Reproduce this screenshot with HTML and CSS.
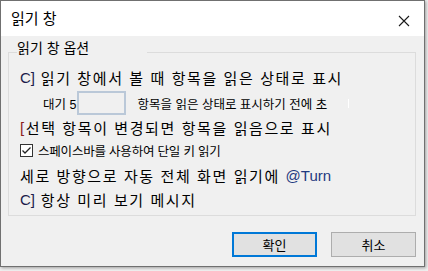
FILE: index.html
```html
<!DOCTYPE html>
<html lang="ko">
<head>
    <meta charset="UTF-8">
    <title>읽기 창</title>
    <link rel="stylesheet" href="styles.css">
</head>
<body>

    <!-- Dialog window -->
    <div class="window">
        <div class="titlebar">
            <span class="title">읽기 창</span>
            <svg class="close" width="12" height="12" viewBox="0 0 12 12">
                <path d="M1 1 L11 11 M11 1 L1 11" stroke="#1a1a1a" stroke-width="1.1" fill="none"/>
            </svg>
        </div>

        <div class="content">
            <!-- Options group -->
            <fieldset class="group">
                <legend>읽기 창 옵션</legend>

                <div class="row r1 big">
                    <span class="mark">C]</span>&nbsp;읽기 창에서 볼 때 항목을 읽은 상태로 표시
                </div>

                <div class="row r2 small">
                    <span class="wait">대기 5</span>
                    <span class="num-box"></span>
                    <span class="after">항목을 읽은 상태로 표시하기 전에 초</span>
                    <span class="caret"></span>
                </div>

                <div class="row r3 big">
                    <span class="bracket">[</span>선택 항목이 변경되면 항목을 읽음으로 표시
                </div>

                <div class="row r4 small">
                    <span class="check">
                        <svg width="13" height="13" viewBox="0 0 13 13">
                            <rect x="0.5" y="0.5" width="12" height="12" fill="#fff" stroke="#333"/>
                            <path d="M2.5 6.5 L5 9 L10.5 3.5" stroke="#222" stroke-width="1.3" fill="none"/>
                        </svg>
                    </span>
                    스페이스바를 사용하여 단일 키 읽기
                </div>

                <div class="row r5 big">
                    세로 방향으로 자동 전체 화면 읽기에&nbsp;<span class="turn">@Turn</span>
                </div>

                <div class="row r6 big">
                    <span class="mark">C]</span>&nbsp;항상 미리 보기 메시지
                </div>
            </fieldset>

            <!-- Dialog buttons -->
            <div class="buttons">
                <button class="btn btn-default">확인</button>
                <button class="btn">취소</button>
            </div>
        </div>
    </div>

</body>
</html>
```

FILE: styles.css
```css
/* General Reset */
body, html {
    margin: 0;
    padding: 0;
}

body {
    width: 428px;
    height: 271px;
    background: #f0f0f0;
    font-family: "Liberation Sans", "Noto Sans CJK KR", sans-serif;
    color: #000;
    overflow: hidden;
}

/* Window frame */
.window {
    width: 423px;
    height: 265px;
    border: 1px solid #707070;
    background: #f0f0f0;
    box-shadow: 1px 1px 3px rgba(0, 0, 0, 0.35);
    display: flex;
    flex-direction: column;
}

.titlebar {
    height: 35px;
    background: #fff;
    display: flex;
    align-items: center;
    justify-content: space-between;
    padding: 0 14px 0 10px;
}

.title {
    font-size: 15px;
    margin-top: -3px;
}

.close {
    margin-top: 4px;
}

.content {
    padding: 0 8px 0 7px;
}

/* Group box */
.group {
    border: 1px solid #dcdcdc;
    margin: 3px 0 0 0;
    padding: 0 0 4px 11px;
}

.group legend {
    font-size: 14px;
    padding: 0 58px 8px 0;
    margin-left: -3px;
    line-height: 18px;
}

.row {
    display: flex;
    align-items: center;
    white-space: nowrap;
}

.big {
    font-size: 15px;
    letter-spacing: 1.6px;
}

.small {
    font-size: 12.5px;
}

.r1 { height: 24px; }
.r2 { height: 28px; }
.r3 { height: 20px; }
.r4 { height: 26px; }
.r5 { height: 24px; }
.r6 { height: 24px; }

.mark {
    color: #1c1c4a;
    letter-spacing: 0;
}

.bracket {
    color: #8a1b1b;
}

.turn {
    color: #1f3a80;
    letter-spacing: 0;
}

/* Wait-time row */
.wait {
    margin-left: 23px;
}

.num-box {
    width: 45px;
    height: 20px;
    border: 2px solid #bac8d8;
    margin-left: 1px;
}

.after {
    margin-left: 11px;
}

.caret {
    width: 1px;
    height: 9px;
    background: #fff;
    margin-left: 21px;
}

.check {
    display: flex;
    margin-right: 5px;
}

.r4 {
    letter-spacing: -0.2px;
}

/* Buttons */
.buttons {
    display: flex;
    justify-content: flex-end;
    gap: 14px;
    margin-top: 16px;
}

.btn {
    width: 85px;
    height: 25px;
    background: #e1e1e1;
    border: 1px solid #adadad;
    font-family: "Noto Sans CJK KR", sans-serif;
    font-size: 13px;
    padding: 0;
}

.btn-default {
    border: 2px solid #0078d7;
}
```
